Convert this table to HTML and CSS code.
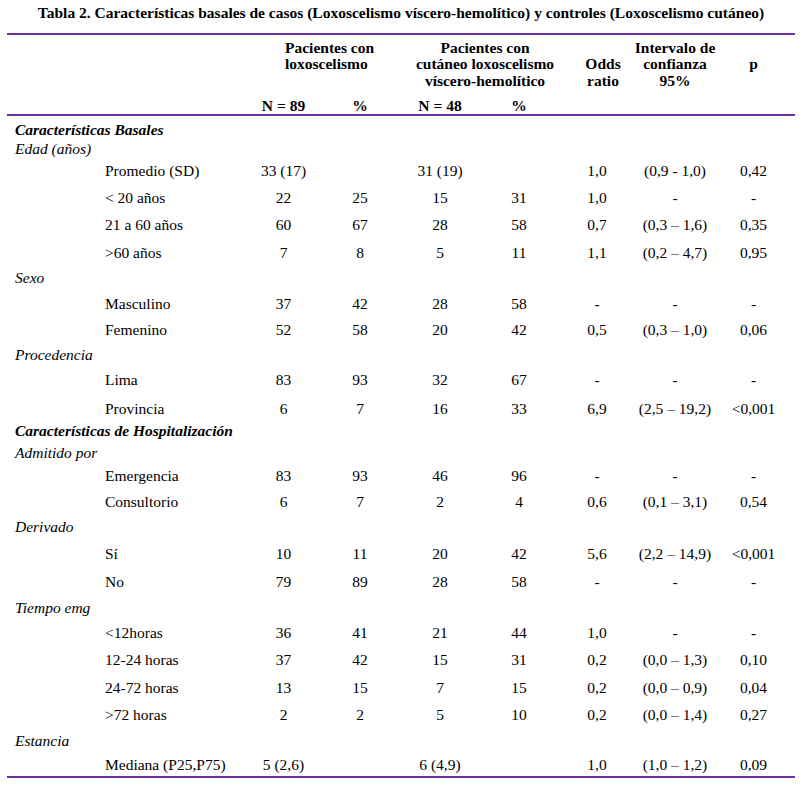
FILE: index.html
```html
<!DOCTYPE html>
<html lang="es">
<head>
<meta charset="utf-8">
<title>Tabla 2</title>
<link rel="stylesheet" href="styles.css">
</head>
<body>
<div class="page">
  <div class="title">Tabla 2. Características basales de casos (Loxoscelismo víscero-hemolítico) y controles (Loxoscelismo cutáneo)</div>
  <div class="table">
    <div class="head">
      <div class="row head-a">
        <div></div>
        <div class="span2 h-left">Pacientes con<br>loxoscelismo</div>
        <div class="span2 stack h-shift">
          <span>Pacientes con</span>
          <span>cutáneo loxoscelismo</span>
          <span>víscero-hemolítico</span>
        </div>
        <div class="stack h-odds"><span>Odds</span><span>ratio</span></div>
        <div class="stack"><span>Intervalo de</span><span>confianza</span><span>95%</span></div>
        <div class="stack h-p"><span>p</span></div>
      </div>
      <div class="row head-b">
        <div></div>
        <div class="c">N = 89</div>
        <div class="c">%</div>
        <div class="c">N = 48</div>
        <div class="c">%</div>
        <div></div><div></div><div></div>
      </div>
    </div>
    <div class="body">
      <div class="row h19"><div class="cat bold">Características Basales</div></div>
      <div class="row h22"><div class="cat">Edad (años)</div></div>
      <div class="row h27"><div class="sub">Promedio (SD)</div><div class="c">33 (17)</div><div class="c"></div><div class="c">31 (19)</div><div class="c"></div><div class="c">1,0</div><div class="c">(0,9 - 1,0)</div><div class="c">0,42</div></div>
      <div class="row h27"><div class="sub">&lt; 20 años</div><div class="c">22</div><div class="c">25</div><div class="c">15</div><div class="c">31</div><div class="c">1,0</div><div class="c">-</div><div class="c">-</div></div>
      <div class="row h28"><div class="sub">21 a 60 años</div><div class="c">60</div><div class="c">67</div><div class="c">28</div><div class="c">58</div><div class="c">0,7</div><div class="c">(0,3 – 1,6)</div><div class="c">0,35</div></div>
      <div class="row h25"><div class="sub">&gt;60 años</div><div class="c">7</div><div class="c">8</div><div class="c">5</div><div class="c">11</div><div class="c">1,1</div><div class="c">(0,2 – 4,7)</div><div class="c">0,95</div></div>
      <div class="row h26"><div class="cat">Sexo</div></div>
      <div class="row h26"><div class="sub">Masculino</div><div class="c">37</div><div class="c">42</div><div class="c">28</div><div class="c">58</div><div class="c">-</div><div class="c">-</div><div class="c">-</div></div>
      <div class="row h25"><div class="sub">Femenino</div><div class="c">52</div><div class="c">58</div><div class="c">20</div><div class="c">42</div><div class="c">0,5</div><div class="c">(0,3 – 1,0)</div><div class="c">0,06</div></div>
      <div class="row h25"><div class="cat">Procedencia</div></div>
      <div class="row h29"><div class="sub">Lima</div><div class="c">83</div><div class="c">93</div><div class="c">32</div><div class="c">67</div><div class="c">-</div><div class="c">-</div><div class="c">-</div></div>
      <div class="row h22"><div class="sub">Provincia</div><div class="c">6</div><div class="c">7</div><div class="c">16</div><div class="c">33</div><div class="c">6,9</div><div class="c">(2,5 – 19,2)</div><div class="c">&lt;0,001</div></div>
      <div class="row h22"><div class="cat bold">Características de Hospitalización</div></div>
      <div class="row h23"><div class="cat">Admitido por</div></div>
      <div class="row h26"><div class="sub">Emergencia</div><div class="c">83</div><div class="c">93</div><div class="c">46</div><div class="c">96</div><div class="c">-</div><div class="c">-</div><div class="c">-</div></div>
      <div class="row h25"><div class="sub">Consultorio</div><div class="c">6</div><div class="c">7</div><div class="c">2</div><div class="c">4</div><div class="c">0,6</div><div class="c">(0,1 – 3,1)</div><div class="c">0,54</div></div>
      <div class="row h27"><div class="cat">Derivado</div></div>
      <div class="row h28"><div class="sub">Sí</div><div class="c">10</div><div class="c">11</div><div class="c">20</div><div class="c">42</div><div class="c">5,6</div><div class="c">(2,2 – 14,9)</div><div class="c">&lt;0,001</div></div>
      <div class="row h26"><div class="sub">No</div><div class="c">79</div><div class="c">89</div><div class="c">28</div><div class="c">58</div><div class="c">-</div><div class="c">-</div><div class="c">-</div></div>
      <div class="row h25"><div class="cat">Tiempo emg</div></div>
      <div class="row h27"><div class="sub">&lt;12horas</div><div class="c">36</div><div class="c">41</div><div class="c">21</div><div class="c">44</div><div class="c">1,0</div><div class="c">-</div><div class="c">-</div></div>
      <div class="row h28"><div class="sub">12-24 horas</div><div class="c">37</div><div class="c">42</div><div class="c">15</div><div class="c">31</div><div class="c">0,2</div><div class="c">(0,0 – 1,3)</div><div class="c">0,10</div></div>
      <div class="row h27"><div class="sub">24-72 horas</div><div class="c">13</div><div class="c">15</div><div class="c">7</div><div class="c">15</div><div class="c">0,2</div><div class="c">(0,0 – 0,9)</div><div class="c">0,04</div></div>
      <div class="row h26"><div class="sub">&gt;72 horas</div><div class="c">2</div><div class="c">2</div><div class="c">5</div><div class="c">10</div><div class="c">0,2</div><div class="c">(0,0 – 1,4)</div><div class="c">0,27</div></div>
      <div class="row h24"><div class="cat">Estancia</div></div>
      <div class="row h20"><div class="sub">Mediana (P25,P75)</div><div class="c">5 (2,6)</div><div class="c"></div><div class="c">6 (4,9)</div><div class="c"></div><div class="c">1,0</div><div class="c">(1,0 – 1,2)</div><div class="c">0,09</div></div>
    </div>
  </div>
</div>
</body>
</html>
```
FILE: styles.css
```css
html, body {
  margin: 0;
  padding: 0;
  background: #ffffff;
}
body {
  color: #000000;
  font-family: "Liberation Serif", "Times New Roman", serif;
  font-size: 15.5px;
}
.page {
  width: 788px;
  margin-left: 7px;
}
.title {
  padding-top: 4px;
  height: 18px;
  line-height: 18px;
  margin-bottom: 11px;
  font-size: 15.5px;
  font-weight: bold;
  text-align: center;
  white-space: nowrap;
}
.table {
  border-top: 2px solid #7030a0;
  border-bottom: 2px solid #7030a0;
}
.head {
  border-bottom: 2px solid #7030a0;
  font-weight: bold;
}
.row {
  display: grid;
  grid-template-columns: 238px 77px 76px 84px 74px 82px 74px 83px;
  line-height: 17px;
  box-sizing: border-box;
  white-space: nowrap;
}
.head-a {
  height: 63px;
  padding-top: 4.5px;
  line-height: 16.5px;
}
.head-b {
  height: 16px;
  line-height: 16px;
}
.span2 {
  grid-column: span 2;
}
.h-left {
  padding-left: 40px;
}
.stack {
  display: flex;
  flex-direction: column;
  align-items: center;
}
.h-shift {
  padding-left: 16px;
}
.h-odds {
  padding-left: 12px;
  padding-top: 16.5px;
}
.h-p {
  padding-top: 16.5px;
}
.body {
  padding-top: 5px;
}
.c {
  text-align: center;
}
.cat {
  font-style: italic;
  padding-left: 8px;
}
.bold {
  font-weight: bold;
}
.sub {
  padding-left: 98px;
}
.h19 { height: 19px; }
.h20 { height: 20px; }
.h22 { height: 22px; }
.h23 { height: 23px; }
.h24 { height: 24px; }
.h25 { height: 25px; }
.h26 { height: 26px; }
.h27 { height: 27px; }
.h28 { height: 28px; }
.h29 { height: 29px; }
```
